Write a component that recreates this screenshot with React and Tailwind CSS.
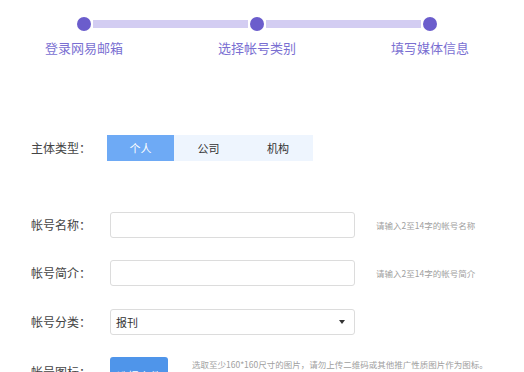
export default function App() {
  const font = { fontFamily: '"Noto Sans CJK SC", "Microsoft YaHei", sans-serif' };
  return (
    <div className="w-[524px] h-[372px] overflow-hidden bg-white" style={font}>
      {/* progress */}
      <div className="flex items-center pt-[17px] pl-[77px]">
        <div className="w-[14px] h-[14px] rounded-full bg-[#6b5dcc]" />
        <div className="ml-[2px] mr-[2px] w-[155px] h-[8px] bg-[#d3cdf2]" />
        <div className="w-[14px] h-[14px] rounded-full bg-[#6b5dcc]" />
        <div className="ml-[2px] mr-[2px] w-[155px] h-[8px] bg-[#d3cdf2]" />
        <div className="w-[14px] h-[14px] rounded-full bg-[#6b5dcc]" />
      </div>
      <div className="flex pl-[24px] gap-[53px] mt-[8px] text-[13px] leading-[18px] text-[#7a6fd2]">
        <div className="w-[120px] text-center">登录网易邮箱</div>
        <div className="w-[120px] text-center">选择帐号类别</div>
        <div className="w-[120px] text-center">填写媒体信息</div>
      </div>

      {/* form */}
      <div className="flex items-center mt-[78px] h-[26px]">
        <div className="w-[107px] pl-[31px] text-[12px] text-[#444] whitespace-nowrap">主体类型：</div>
        <div className="flex h-[26px] bg-[#eef5fe] text-[11px]">
          <div className="w-[67px] flex items-center justify-center bg-[#6eaaf5] text-white">个人</div>
          <div className="w-[69px] flex items-center justify-center text-[#333]">公司</div>
          <div className="w-[70px] flex items-center justify-center text-[#333]">机构</div>
        </div>
      </div>

      <div className="flex items-center mt-[51px] h-[26px]">
        <div className="w-[110px] pl-[31px] text-[12px] text-[#444] whitespace-nowrap">帐号名称：</div>
        <div className="w-[245px] h-[26px] border border-[#dcdcdc] rounded-[3px]" />
        <div className="ml-[21px] text-[8.5px] text-[#a0a0a0] whitespace-nowrap">请输入2至14字的帐号名称</div>
      </div>

      <div className="flex items-center mt-[22px] h-[26px]">
        <div className="w-[110px] pl-[31px] text-[12px] text-[#444] whitespace-nowrap">帐号简介：</div>
        <div className="w-[245px] h-[26px] border border-[#dcdcdc] rounded-[3px]" />
        <div className="ml-[21px] text-[8.5px] text-[#a0a0a0] whitespace-nowrap">请输入2至14字的帐号简介</div>
      </div>

      <div className="flex items-center mt-[23px] h-[26px]">
        <div className="w-[110px] pl-[31px] text-[12px] text-[#444] whitespace-nowrap">帐号分类：</div>
        <div className="w-[245px] h-[26px] border border-[#dcdcdc] rounded-[3px] flex items-center justify-between pl-[5px] pr-[9px]">
          <span className="text-[11px] text-[#333]">报刊</span>
          <div className="w-0 h-0 border-l-[3px] border-r-[3px] border-t-[4px] border-l-transparent border-r-transparent border-t-[#333]" />
        </div>
      </div>

      <div className="flex items-start mt-[22px]">
        <div className="w-[110px] pl-[31px] pt-[6px] text-[12px] text-[#444] whitespace-nowrap">帐号图标：</div>
        <div className="w-[58px] h-[28px] rounded-[3px] bg-[#4f95ea] text-white text-[11px] flex items-center justify-center pt-[10px]">选择文件</div>
        <div className="ml-[24px] mt-[1px] text-[8.5px] text-[#a0a0a0] whitespace-nowrap">选取至少160*160尺寸的图片，请勿上传二维码或其他推广性质图片作为图标。</div>
      </div>
    </div>
  );
}
